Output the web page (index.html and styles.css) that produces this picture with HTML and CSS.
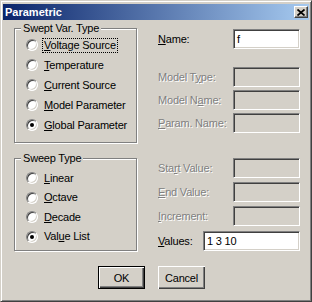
FILE: index.html
```html
<!DOCTYPE html>
<html lang="en">
<head>
    <meta charset="utf-8">
    <title>Parametric</title>
    <link rel="stylesheet" href="styles.css">
</head>
<body>
    <div class="window">
        <div class="caption">
            <span class="caption-title">Parametric</span>
            <span class="close-btn">
                <svg width="8" height="7" viewBox="0 0 8 7"><path d="M0.5 0.5 L7.5 6.5 M7.5 0.5 L0.5 6.5" stroke="#000" stroke-width="1.7"/></svg>
            </span>
        </div>

        <div class="content">
            <div class="left">
                <div class="group group-var">
                    <span class="legend">Swept Var. Type</span>
                    <div class="option"><span class="radio"></span><span class="opt-text focus"><u>V</u>oltage Source</span></div>
                    <div class="option"><span class="radio"></span><span class="opt-text"><u>T</u>emperature</span></div>
                    <div class="option"><span class="radio"></span><span class="opt-text"><u>C</u>urrent Source</span></div>
                    <div class="option"><span class="radio"></span><span class="opt-text"><u>M</u>odel Parameter</span></div>
                    <div class="option"><span class="radio checked"></span><span class="opt-text"><u>G</u>lobal Parameter</span></div>
                </div>

                <div class="group group-sweep">
                    <span class="legend">Sweep Type</span>
                    <div class="option"><span class="radio"></span><span class="opt-text"><u>L</u>inear</span></div>
                    <div class="option"><span class="radio"></span><span class="opt-text"><u>O</u>ctave</span></div>
                    <div class="option"><span class="radio"></span><span class="opt-text"><u>D</u>ecade</span></div>
                    <div class="option"><span class="radio checked"></span><span class="opt-text">Val<u>u</u>e List</span></div>
                </div>
            </div>

            <div class="right">
                <div class="field row-name">
                    <span class="field-label"><u>N</u>ame:</span>
                    <span class="edit short">f</span>
                </div>
                <div class="field row-type">
                    <span class="field-label disabled">Model T<u>y</u>pe:</span>
                    <span class="edit short off"></span>
                </div>
                <div class="field row-tight">
                    <span class="field-label disabled">Model N<u>a</u>me:</span>
                    <span class="edit short off"></span>
                </div>
                <div class="field row-tight">
                    <span class="field-label disabled"><u>P</u>aram. Name:</span>
                    <span class="edit short off"></span>
                </div>
                <div class="field row-start">
                    <span class="field-label disabled">Sta<u>r</u>t Value:</span>
                    <span class="edit short off"></span>
                </div>
                <div class="field row-step">
                    <span class="field-label disabled"><u>E</u>nd Value:</span>
                    <span class="edit short off"></span>
                </div>
                <div class="field row-step">
                    <span class="field-label disabled"><u>I</u>ncrement:</span>
                    <span class="edit short off"></span>
                </div>
                <div class="field row-values">
                    <span class="field-label"><u>V</u>alues:</span>
                    <span class="edit long">1 3 10</span>
                </div>
            </div>
        </div>

        <div class="buttons">
            <button class="btn default">OK</button>
            <button class="btn">Cancel</button>
        </div>
    </div>
</body>
</html>
```

FILE: styles.css
```css
* {
    margin: 0;
    padding: 0;
    box-sizing: border-box;
}

body {
    font-family: "Liberation Sans", Arial, sans-serif;
    font-size: 11px;
    line-height: 13px;
    letter-spacing: -0.2px;
    color: #000;
    background: #d4d0c8;
}

u {
    text-decoration: underline;
    text-underline-offset: 1px;
}

/* window frame */
.window {
    width: 312px;
    height: 302px;
    background: #d4d0c8;
    border: 1px solid;
    border-color: #d4d0c8 #404040 #404040 #d4d0c8;
    box-shadow: inset 1px 1px #fff, inset -1px -1px #808080;
    padding: 2px;
}

.caption {
    height: 16px;
    margin-top: 1px;
    display: flex;
    align-items: center;
    justify-content: space-between;
    padding: 0 1px 0 2px;
    background: linear-gradient(90deg, #0a246a 0%, #a6caf0 100%);
}

.caption-title {
    color: #fff;
    font-weight: bold;
    font-size: 11px;
    line-height: 16px;
    letter-spacing: 0;
}

.close-btn {
    width: 14px;
    height: 12px;
    display: flex;
    align-items: center;
    justify-content: center;
    background: #d4d0c8;
    border: 1px solid;
    border-color: #fff #404040 #404040 #fff;
    box-shadow: inset -1px -1px #808080;
}

.close-btn svg {
    display: block;
}

/* body */
.content {
    display: flex;
    padding-left: 11px;
}

.left {
    width: 124px;
    margin-top: 8px;
}

.group {
    position: relative;
    width: 123px;
    border: 1px solid #808080;
    box-shadow: inset 1px 1px #fff, 1px 1px #fff;
    padding-left: 11px;
}

.group-var {
    height: 115px;
    padding-top: 6px;
}

.group-var .option {
    height: 20px;
}

.group-sweep {
    height: 93px;
    margin-top: 15px;
    padding-top: 9.5px;
}

.group-sweep .option {
    height: 19.5px;
}

.legend {
    position: absolute;
    top: -7px;
    left: 6px;
    padding: 0 2px;
    background: #d4d0c8;
}

.option {
    display: flex;
    align-items: center;
}

.radio {
    position: relative;
    width: 12px;
    height: 12px;
    border-radius: 50%;
    background: #fff;
    border: 1px solid;
    border-color: #808080 #fff #fff #808080;
    box-shadow: inset 1px 1px #404040, inset -1px -1px #d4d0c8;
}

.radio.checked::after {
    content: "";
    position: absolute;
    left: 3px;
    top: 3px;
    width: 4px;
    height: 4px;
    border-radius: 50%;
    background: #000;
}

.opt-text {
    margin-left: 5px;
    padding: 0 1px;
    line-height: 13px;
}

.opt-text.focus {
    outline: 1px dotted #000;
    outline-offset: 0;
}

/* right column */
.right {
    width: 142px;
    margin-left: 20px;
    margin-top: 9px;
}

.field {
    height: 20px;
    display: flex;
    align-items: center;
}

.row-type { margin-top: 18px; }
.row-tight { margin-top: 3px; }
.row-start { margin-top: 25px; }
.row-step { margin-top: 4px; }
.row-values { margin-top: 5px; }

.field-label {
    flex: 1;
}

.field-label.disabled {
    color: #808080;
    text-shadow: 1px 1px #fff;
}

.edit {
    height: 20px;
    padding: 3px 3px 0;
    background: #fff;
    border: 1px solid;
    border-color: #808080 #fff #fff #808080;
    box-shadow: inset 1px 1px #404040, inset -1px -1px #d4d0c8;
    white-space: pre;
}

.edit.short {
    width: 67px;
}

.edit.long {
    width: 97px;
}

.edit.off {
    background: #d4d0c8;
}

/* buttons */
.buttons {
    display: flex;
    gap: 13px;
    padding-left: 95px;
    margin-top: 15px;
}

.btn {
    width: 47px;
    height: 23px;
    font-family: inherit;
    font-size: 11px;
    letter-spacing: inherit;
    color: #000;
    background: #d4d0c8;
    border: none;
    box-shadow: inset 1px 1px #fff, inset -1px -1px #404040, inset -2px -2px #808080;
}

.btn.default {
    border: 1px solid #000;
}
```
